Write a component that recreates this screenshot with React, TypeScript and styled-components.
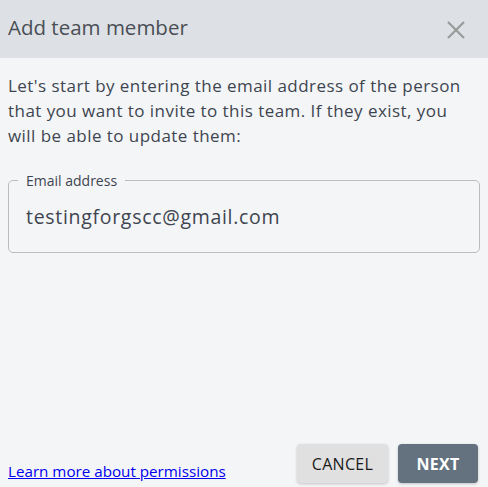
import React from 'react';
import styled, { createGlobalStyle } from 'styled-components';

const GlobalStyle = createGlobalStyle`
  html, body {
    margin: 0;
    padding: 0;
    height: 100%;
    background: #f4f5f7;
  }
  #root {
    height: 100%;
  }
`;

const App = () => {
  return (
    <>
      <GlobalStyle />
      <Dialog>
        <Header>
          <Title>Add team member</Title>
          <CloseButton aria-label="Close">
            <svg width="20" height="20" viewBox="0 0 20 20">
              <path d="M2 2 L18 18 M18 2 L2 18" stroke="#9a9a9a" strokeWidth="2.2" />
            </svg>
          </CloseButton>
        </Header>

        <Body>
          <Intro>
            Let's start by entering the email address of the person that you want to
            invite to this team. If they exist, you will be able to update them:
          </Intro>
          <Field>
            <Legend>Email address</Legend>
            <Input defaultValue="testingforgscc@gmail.com" />
          </Field>
        </Body>

        <Footer>
          <HelpLink href="#">Learn more about permissions</HelpLink>
          <Actions>
            <Button>CANCEL</Button>
            <Button $primary>NEXT</Button>
          </Actions>
        </Footer>
      </Dialog>
    </>
  );
};

const Dialog = styled.div`
  height: 100%;
  display: flex;
  flex-direction: column;
  font-family: 'Open Sans', sans-serif;
  color: #3e4550;
`;

const Header = styled.div`
  height: 58px;
  flex-shrink: 0;
  background: #dde1e5;
  display: flex;
  align-items: center;
  justify-content: space-between;
  padding: 0 16px 0 8px;
`;

const Title = styled.h2`
  margin: 0 0 5px;
  font-family: 'Open Sans', sans-serif;
  font-weight: 400;
  font-size: 20.5px;
  color: #4a4e55;
`;

const CloseButton = styled.button`
  border: none;
  background: none;
  padding: 0;
  margin-top: 1px;
  width: 32px;
  height: 32px;
  display: flex;
  align-items: center;
  justify-content: center;
  cursor: pointer;
`;

const Body = styled.div`
  flex: 1;
  padding: 15px 8px 0;
`;

const Intro = styled.p`
  margin: 0 0 23px;
  font-size: 17px;
  line-height: 25px;
  letter-spacing: 0.45px;
`;

const Field = styled.fieldset`
  margin: 0;
  padding: 13px 17px 22px;
  border: 1px solid #bcbcbc;
  border-radius: 5px;
`;

const Legend = styled.legend`
  margin-left: -8px;
  padding: 0 8px;
  font-size: 14px;
  color: #3e4550;
`;

const Input = styled.input`
  width: 100%;
  box-sizing: border-box;
  border: none;
  background: transparent;
  padding: 0;
  font-family: 'Open Sans', sans-serif;
  font-size: 19.5px;
  letter-spacing: 0.7px;
  color: #3e4550;
  outline: none;
`;

const Footer = styled.div`
  display: flex;
  justify-content: space-between;
  align-items: flex-end;
  padding: 0 10px 4px 8px;
`;

const HelpLink = styled.a`
  font-family: 'Open Sans', sans-serif;
  font-size: 15.2px;
  color: #0000ee;
  margin-bottom: 2px;
`;

const Actions = styled.div`
  display: flex;
  gap: 10px;
`;

const Button = styled.button<{ $primary?: boolean }>`
  height: 39px;
  padding: 0 13px;
  min-width: ${(p) => (p.$primary ? '80px' : '91px')};
  border: none;
  border-radius: 4px;
  font-family: 'Open Sans', sans-serif;
  font-size: 16px;
  letter-spacing: 0.3px;
  font-weight: ${(p) => (p.$primary ? 700 : 500)};
  color: ${(p) => (p.$primary ? '#ffffff' : '#1a1a1a')};
  background: ${(p) => (p.$primary ? '#64717f' : '#e0e0e0')};
  box-shadow: 0 1px 3px rgba(0, 0, 0, 0.2);
  cursor: pointer;
`;

export default App;
